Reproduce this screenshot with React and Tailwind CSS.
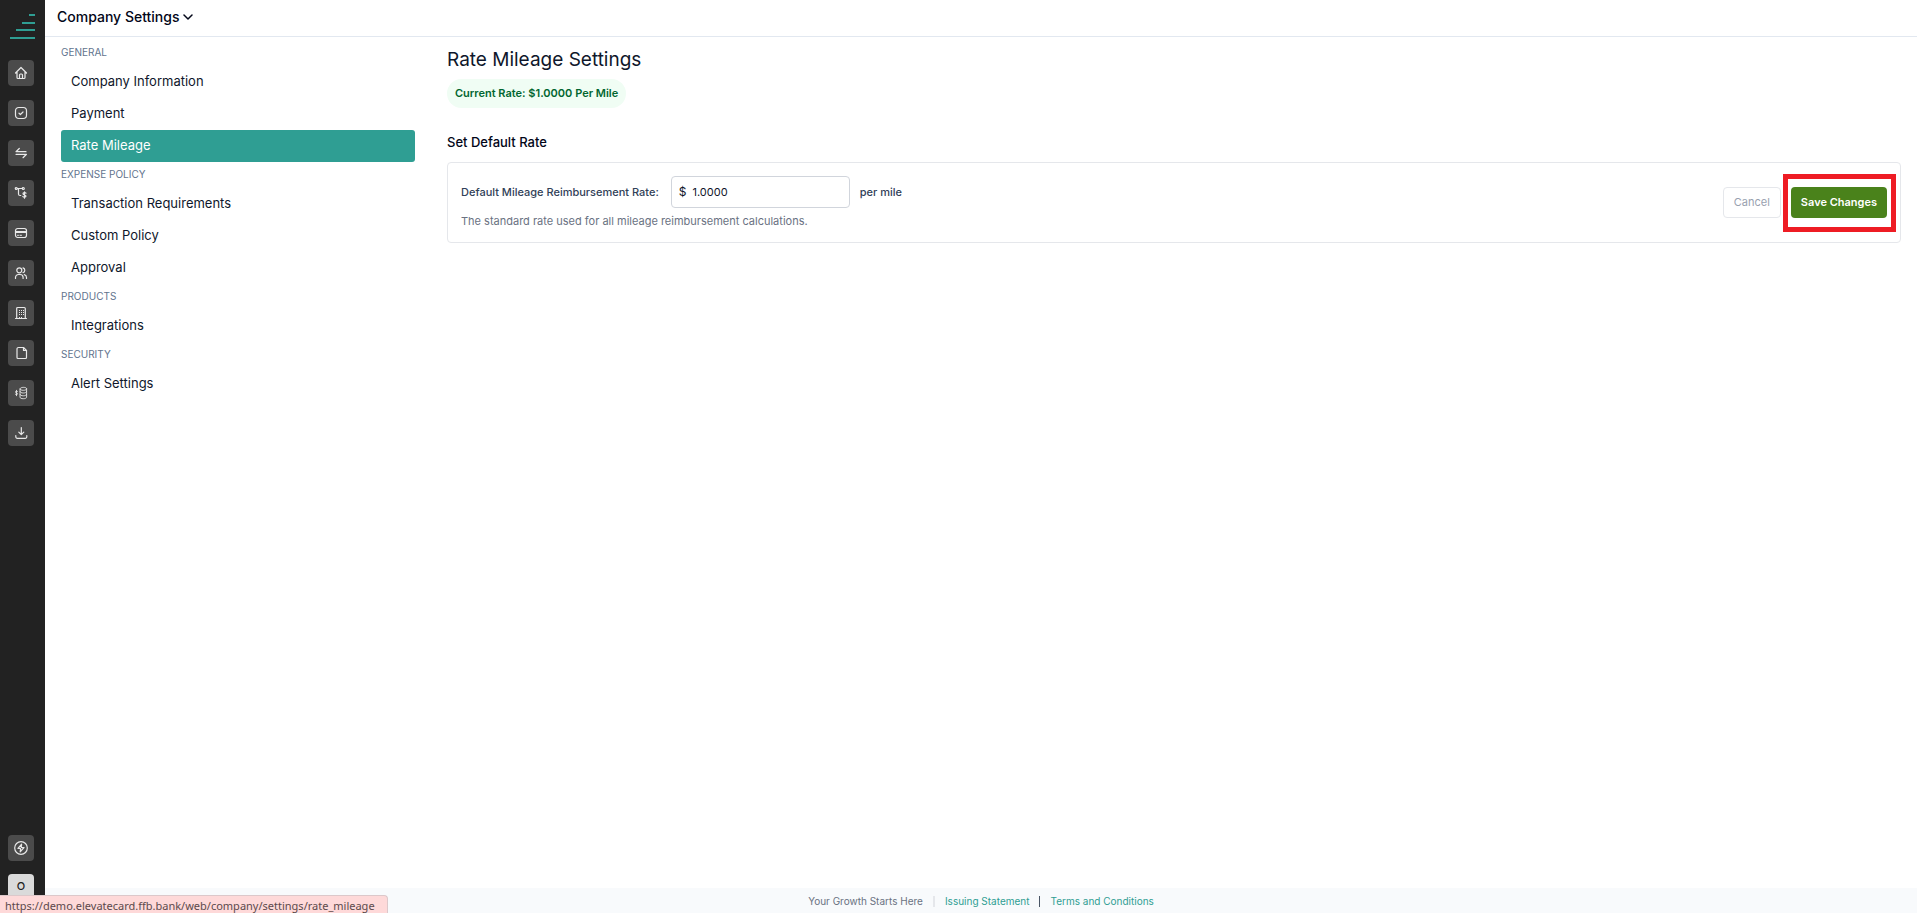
import React from "react";

const iconProps = {
  width: 14,
  height: 14,
  viewBox: "0 0 14 14",
  fill: "none",
  stroke: "currentColor",
  strokeWidth: 1.2,
  strokeLinecap: "round",
  strokeLinejoin: "round",
  "aria-hidden": true,
};

const NAV = [
  {
    name: "Home",
    icon: (
      <>
        <path d="M1.500 7 7 1.500 12.500 7M3 6v5.500a1 1 0 0 0 1 1h6a1 1 0 0 0 1-1V6" />
        <path d="M5.500 12.500V9a1 1 0 0 1 1-1h1a1 1 0 0 1 1 1v3.500" />
      </>
    ),
  },
  {
    name: "Tasks",
    icon: (
      <>
        <rect x="1.500" y="1.500" width="11" height="11" rx="3.200" />
        <path d="m5 7.200 1.400 1.300L9 6" />
      </>
    ),
  },
  {
    name: "Transactions",
    icon: <path d="M5.300 2.500 2 5.700H12M2 8.300h10.500L9 11.700" />,
  },
  {
    name: "Reimbursements",
    icon: (
      <>
        <circle cx="2.300" cy="2.500" r="1" />
        <circle cx="9.300" cy="2.500" r="1" />
        <path d="M3.300 2.500h5M4.500 2.500V8a1.500 1.500 0 0 0 1.500 1.500h.8" />
        <path d="M12 7.200c-.6-.7-3-.8-3 .6s3 .9 3 2.300-2.600 1.300-3.200.4M10.500 5.800v6.400" />
      </>
    ),
  },
  {
    name: "Cards",
    icon: (
      <>
        <rect x="1.500" y="2.500" width="11" height="9" rx="2.200" />
        <path strokeWidth="1" d="M1.500 5.500h11M1.500 6.500h11M3.500 9.300h1M6 9.300h1.500" />
      </>
    ),
  },
  {
    name: "Users",
    icon: (
      <>
        <circle cx="5.300" cy="4.300" r="2.500" />
        <path d="M1.500 12.500v-1a3 3 0 0 1 3-3h1.600a3 3 0 0 1 3 3v1M9 1.900a2.500 2.500 0 0 1 0 4.800M10.300 8.700a2.900 2.900 0 0 1 2.200 2.800v1" />
      </>
    ),
  },
  {
    name: "Company",
    icon: (
      <>
        <path d="M1.500 12.500h11M2.700 12.500v-10a1 1 0 0 1 1-1h6.600a1 1 0 0 1 1 1v10" />
        <path
          strokeWidth="1"
          strokeLinecap="butt"
          strokeDasharray="1 1"
          d="M5.500 4v5M7.500 4v5M9.500 4v5M5.500 11v1M7.500 11v1"
        />
      </>
    ),
  },
  {
    name: "Documents",
    icon: (
      <>
        <path d="M3 3a1.500 1.500 0 0 1 1.500-1.500h5l3 3v7a1 1 0 0 1-1 1H4a1 1 0 0 1-1-1z" />
        <path d="M9.500 1.500v3h3" />
      </>
    ),
  },
  {
    name: "Accounting",
    icon: (
      <>
        <path strokeWidth="0.900" d="M3.600 5.500c-.4-.5-2.200-.5-2.200.5s2.200.8 2.200 1.800-1.900 1-2.400.4M2.500 4.300v5.400" />
        <path
          strokeWidth="0.900"
          d="M6 2.800c0-2 6.600-2 6.600 0s-6.600 2-6.600 0v8.400c0 2 6.600 2 6.600 0V2.800M6 5.600c0 2 6.600 2 6.600 0M6 8.400c0 2 6.600 2 6.600 0"
        />
      </>
    ),
  },
  {
    name: "Downloads",
    icon: <path d="M7.300 1.500v7M4.800 6.200l2.500 2.500 2.500-2.500M1.800 9.500v1.300a1.500 1.500 0 0 0 1.500 1.500h8a1.500 1.500 0 0 0 1.500-1.500V9.500" />,
  },
];

const SECTIONS = [
  { title: "GENERAL", items: ["Company Information", "Payment", "Rate Mileage"] },
  { title: "EXPENSE POLICY", items: ["Transaction Requirements", "Custom Policy", "Approval"] },
  { title: "PRODUCTS", items: ["Integrations"] },
  { title: "SECURITY", items: ["Alert Settings"] },
];

function RailButton({ name, children }) {
  return (
    <button
      type="button"
      aria-label={name}
      className="flex size-[26px] items-center justify-center rounded bg-[#4b4b4b] text-[#e8e8e8]"
    >
      {children}
    </button>
  );
}

function Rail() {
  return (
    <nav aria-label="Main" className="flex w-[45px] shrink-0 flex-col bg-[#222222] pl-2">
      <a href="#home" aria-label="Dashboard" className="flex h-[60px] justify-end pt-3.5 pr-2.5">
        <svg width="25" height="25" viewBox="0 0 25 25" fill="#2f9e93" aria-hidden="true">
          <rect x="19" y="0" width="6" height="2" />
          <rect x="12" y="8" width="13" height="2" />
          <rect x="6" y="15" width="19" height="2" />
          <rect x="0" y="23" width="25" height="2" />
        </svg>
      </a>
      <div className="flex flex-col gap-3.5">
        {NAV.map((item) => (
          <RailButton key={item.name} name={item.name}>
            <svg {...iconProps}>{item.icon}</svg>
          </RailButton>
        ))}
      </div>
      <div className="mt-auto flex flex-col gap-[13px] pb-[13px]">
        <RailButton name="Quick actions">
          <svg {...iconProps}>
            <circle cx="7" cy="7" r="6.300" />
            <path d="M7.600 3.200 4 7.500h2.600l-.4 3.300L10 6.500H7.300z" />
          </svg>
        </RailButton>
        <button
          type="button"
          className="size-[26px] rounded bg-[#dadada] pb-0.5 text-[11px] font-medium text-[#222222]"
        >
          O
        </button>
      </div>
    </nav>
  );
}

function SettingsMenu() {
  return (
    <nav aria-label="Settings" className="w-[370px] shrink-0 pt-[3px] pr-4">
      {SECTIONS.map((section) => (
        <section key={section.title}>
          <h2 className="flex h-[26px] items-center pb-0.5 text-[10px] text-slate-500">{section.title}</h2>
          <ul>
            {section.items.map((item) => (
              <li key={item}>
                <a
                  href="#settings"
                  aria-current={item === "Rate Mileage" ? "page" : undefined}
                  className={
                    item === "Rate Mileage"
                      ? "flex h-8 items-center rounded-[3px] bg-[#2f9e93] px-2.5 text-[13px] text-white"
                      : "flex h-8 items-center rounded-[3px] px-2.5 text-[13px] text-slate-900"
                  }
                >
                  {item}
                </a>
              </li>
            ))}
          </ul>
        </section>
      ))}
    </nav>
  );
}

function RateForm() {
  return (
    <form
      onSubmit={(event) => event.preventDefault()}
      className="mt-[11px] flex items-center justify-between rounded border border-gray-200 px-[13px] pt-[13px] pb-3 text-[11px]"
    >
      <div>
        <div className="flex items-center">
          <label htmlFor="rate" className="font-medium text-slate-700">
            Default Mileage Reimbursement Rate:
          </label>
          <div className="ml-3 flex h-8 w-[179px] items-center gap-1.5 rounded border border-gray-300 px-[7px] text-slate-900">
            <span className="text-xs">$</span>
            <input id="rate" type="text" defaultValue="1.0000" className="min-w-0 flex-1 outline-none" />
          </div>
          <span className="ml-2.5 font-medium text-slate-700">per mile</span>
        </div>
        <p className="mt-1 leading-[18px] text-gray-500">
          The standard rate used for all mileage reimbursement calculations.
        </p>
      </div>
      <div className="relative flex gap-2.5 pb-px">
        <button type="button" disabled className="h-[31px] rounded border border-gray-200 px-2.5 font-normal text-gray-400">
          Cancel
        </button>
        <button type="submit" className="h-[31px] rounded bg-[#4a821b] px-2.5 font-semibold text-white">
          Save Changes
        </button>
        <span
          aria-hidden="true"
          className="pointer-events-none absolute -top-[13px] -right-[9px] h-[58px] w-[113px] border-5 border-[#ee1c24]"
        />
      </div>
    </form>
  );
}

export default function App() {
  return (
    <div className="flex h-screen overflow-hidden bg-white font-['Inter','Liberation_Sans',sans-serif] leading-normal text-slate-950">
      <Rail />
      <div className="flex min-w-0 flex-1 flex-col">
        <header className="flex h-[37px] shrink-0 items-center border-b border-slate-200 px-3 pb-0.5">
          <button type="button" className="flex items-center gap-1 text-sm font-medium">
            Company Settings
            <svg
              width="10"
              height="6"
              viewBox="0 0 10 6"
              fill="none"
              stroke="currentColor"
              strokeWidth="1.500"
              strokeLinecap="round"
              strokeLinejoin="round"
              aria-hidden="true"
            >
              <path d="m1 1 4 4 4-4" />
            </svg>
          </button>
        </header>
        <div className="flex min-h-0 flex-1 pr-4 pl-4">
          <SettingsMenu />
          <main className="ml-4 min-w-0 flex-1">
            <h1 className="pt-2 text-[19px] leading-[30px] text-slate-900">Rate Mileage Settings</h1>
            <p className="mt-1 flex h-[29px] w-fit items-center rounded-full bg-green-50 px-2 text-[11px] font-semibold text-green-800">
              Current Rate: $1.0000 Per Mile
            </p>
            <h2 className="mt-[25px] text-[13px] leading-[18px] font-medium">Set Default Rate</h2>
            <RateForm />
          </main>
        </div>
        <footer className="flex h-[25px] shrink-0 items-center justify-center gap-2.5 bg-slate-50 pt-0.5 text-[10px] text-[#2f9e93]">
          <span className="text-gray-500">Your Growth Starts Here</span>
          <span className="h-[11px] border-l-2 border-gray-200" />
          <a href="#statement">Issuing Statement</a>
          <span className="h-[11px] border-l border-gray-600" />
          <a href="#terms">Terms and Conditions</a>
        </footer>
      </div>
      <div className="fixed bottom-0 left-0 h-[18px] rounded-tr border-t border-r border-[#dcc8ca] bg-[#fed9d9] pt-[3px] pr-3 pl-[5px] font-['Noto_Sans',sans-serif] text-[11px] leading-[14px] whitespace-nowrap text-[#5c4a4c]">
        https://demo.elevatecard.ffb.bank/web/company/settings/rate_mileage
      </div>
    </div>
  );
}
